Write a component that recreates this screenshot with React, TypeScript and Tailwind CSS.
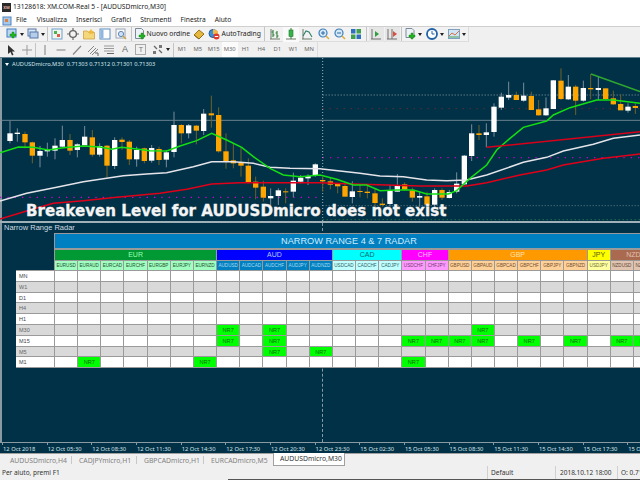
import React from "react";

type C = [number, number, number, number, number, number];
// x, high, low, bodyTop, bodyBottom, 1=white 0=orange  (coordinates at 3x)
const L: C[] = [
  [30,183,250,220,243,1],[52,205,245,218,222,1],[75,215,265,222,247,0],[97,245,310,247,287,0],[120,258,322,273,287,1],[142,248,290,269,274,1],[165,235,298,257,272,1],[187,197,260,240,260,1],[210,222,285,240,272,0],[232,250,292,253,270,1],[254,198,256,230,256,1],[277,210,290,232,284,0],[299,250,290,258,284,1],[321,255,352,257,317,0],[344,232,327,240,318,1],[366,232,270,239,246,0],[388,240,315,245,298,0],[410,260,320,270,298,1],[433,263,310,265,303,0],[455,255,308,264,302,1],[477,260,315,267,300,0],[499,270,322,277,299,1],[522,155,292,195,276,1],[544,192,250,195,220,0],[566,192,235,196,220,1],[589,195,253,197,212,0],[611,147,225,161,213,1],[634,107,203,160,166,0],[656,142,278,165,274,0],[678,220,326,274,303,0],[700,250,325,301,310,0],[723,262,350,308,317,0],[745,295,370,317,367,0],[767,350,418,365,383,0],[790,362,425,380,413,0],[812,385,435,408,415,1],[835,385,435,391,408,1],[857,385,430,394,397,0],[880,338,412,362,395,1],[902,345,370,353,365,1],[924,343,375,348,355,1],[946,310,350,313,345,1],
];
const R: C[] = [
  [8,350,395,360,364,0],[31,352,388,364,374,0],[53,370,400,372,379,0],[75,365,410,378,410,0],[97,364,430,394,411,1],[120,372,412,393,396,0],[142,375,415,395,399,0],[165,385,440,400,429,0],[187,415,440,431,435,0],[210,375,440,393,432,1],[232,342,395,377,395,1],[254,367,392,373,389,0],[277,383,425,391,413,0],[299,395,440,408,413,1],[321,395,437,409,434,0],[344,385,440,390,434,1],[366,385,420,390,413,0],[388,390,415,396,414,1],[410,337,400,371,395,1],[433,285,375,287,373,1],[455,193,303,220,288,1],[477,195,240,220,225,0],[499,190,262,217,225,1],[522,130,230,140,216,1],[544,98,150,110,143,1],[566,65,120,105,113,1],[589,95,120,105,120,0],[611,68,125,107,122,1],[634,95,150,108,150,0],[656,120,167,148,166,0],[678,112,167,145,166,1],[700,60,147,61,147,1],[723,25,120,62,117,0],[745,45,120,80,118,1],[767,75,165,80,122,0],[790,62,125,84,122,1],[812,42,118,84,88,0],[835,50,120,84,90,1],[857,85,120,85,117,0],[880,92,135,115,133,0],[902,103,150,132,151,0],[924,130,158,140,152,1],[946,130,162,138,144,0],
];
const candles: C[] = [...L, ...R.map((c) => [c[0] + 960, c[1], c[2], c[3], c[4], c[5]] as C)];

const shift = (s: string) =>
  s.split(" ").map((p) => { const [x, y] = p.split(","); return `${+x + 960},${y}`; }).join(" ");

const green = "0,278 55,261 100,262 145,270 190,263 250,258 300,261 335,268 365,262 410,267 450,272 500,273 540,258 590,242 635,220 680,240 725,262 760,290 810,325 850,345 900,350 960,345 " +
  shift("50,358 100,375 140,375 180,392 230,390 280,390 320,402 385,402 410,392 450,355 500,315 530,270 570,235 610,202 680,183 700,165 750,143 830,120 880,120 960,130");
const white = "0,423 80,400 170,382 250,365 320,355 370,347 440,342 500,338 580,320 635,305 700,305 760,310 810,322 870,325 960,326 " +
  shift("60,333 120,340 180,348 250,350 320,360 380,362 440,360 500,345 610,307 680,292 730,273 820,253 880,235 960,225");
const red = "0,477 80,453 160,430 250,422 350,412 480,400 560,388 635,372 720,368 800,368 960,368 " +
  shift("100,372 200,375 300,378 440,378 500,368 600,345 680,330 730,315 850,295 960,282");

const groups = [
  { name: "EUR", bg: "bg-[#009933]", text: "text-[#9dffb0]", span: "col-span-7", pbg: "bg-[#a0ffc0]", ptext: "text-[#1f4f30]", pairs: ["EURUSD","EURAUD","EURCAD","EURCHF","EURGBP","EURJPY","EURNZD"] },
  { name: "AUD", bg: "bg-[#0000ff]", text: "text-[#b0c8ff]", span: "col-span-5", pbg: "bg-[#0080c0]", ptext: "text-[#a8d8f0]", pairs: ["AUDUSD","AUDCAD","AUDCHF","AUDJPY","AUDNZD"] },
  { name: "CAD", bg: "bg-[#00ffff]", text: "text-[#006a6a]", span: "col-span-3", pbg: "bg-[#c0ffff]", ptext: "text-[#2f5f5f]", pairs: ["USDCAD","CADCHF","CADJPY"] },
  { name: "CHF", bg: "bg-[#ff00ff]", text: "text-[#ffc0ff]", span: "col-span-2", pbg: "bg-[#ff99ff]", ptext: "text-[#703a70]", pairs: ["USDCHF","CHFJPY"] },
  { name: "GBP", bg: "bg-[#ff9900]", text: "text-[#ffe0b0]", span: "col-span-6", pbg: "bg-[#ffd098]", ptext: "text-[#705030]", pairs: ["GBPUSD","GBPAUD","GBPCAD","GBPCHF","GBPJPY","GBPNZD"] },
  { name: "JPY", bg: "bg-[#ffff00]", text: "text-[#5a5a00]", span: "col-span-1", pbg: "bg-[#ffffa0]", ptext: "text-[#6a6a30]", pairs: ["USDJPY"] },
  { name: "NZD", bg: "bg-[#aa6a50]", text: "text-[#e0c0b0]", span: "col-span-2", pbg: "bg-[#e0c4b0]", ptext: "text-[#604838]", pairs: ["NZDUSD","NZDCAD"] },
];

const rows: [string, number[]][] = [
  ["MN", []], ["W1", []], ["D1", []], ["H4", []], ["H1", []],
  ["M30", [7, 9, 18]],
  ["M15", [7, 9, 15, 16, 17, 18, 20, 22, 24, 25]],
  ["M5", [9, 11]],
  ["M1", [1, 6, 15]],
];
const cols = Array.from({ length: 26 }, (_, i) => i);

const Caret = () => <span className="ml-[2px] w-0 h-0 border-x-[2.5px] border-x-transparent border-t-[3px] border-t-[#222]" />;
const Sep = ({ cls }: { cls: string }) => <div className={`${cls} flex justify-center`}><div className="w-px h-[14px] bg-[#c4c4c4]" /></div>;
const Slot = ({ cls, children }: { cls: string; children: React.ReactNode }) => (
  <div className={`${cls} h-[15px] flex items-center justify-center shrink-0`}>{children}</div>
);
const Ic = ({ children }: { children: React.ReactNode }) => (
  <svg width="12" height="12" viewBox="0 0 12 12" className="shrink-0">{children}</svg>
);

const Plus = ({ x = 6, y = 7 }: { x?: number; y?: number }) => (
  <path d={`M${x - 1} ${y - 3}h2v2h2v2h-2v2h-2v-2h-2v-2h2z`} fill="#21b521" stroke="#0d7d0d" strokeWidth=".4" />
);
const Tf = ["M1", "M5", "M15", "M30", "H1", "H4", "D1", "W1", "MN"];

function Toolbars() {
  return (
    <div className="bg-[#f0f0f0] h-[31px] border-t border-[#cfcfcf] relative shrink-0">
      <div className="w-[469px] h-[15px] flex items-center bg-[#f2f2f2] border-r border-b border-[#dcdcdc]">
        <div className="w-[4px] shrink-0" />
        <Slot cls="w-[22px]"><Ic><rect x="1" y="1" width="9" height="8" fill="#bcd6f0" stroke="#3f7fc0" /><Plus x={7} y={7} /></Ic><Caret /></Slot>
        <Slot cls="w-[20px]"><Ic><rect x="1" y="1" width="8" height="7" fill="#d8e6f6" stroke="#5578a8" /><rect x="3" y="4" width="8" height="6" fill="#b5cdea" stroke="#5578a8" /></Ic><Caret /></Slot>
        <Sep cls="w-[3px]" />
        <Slot cls="w-[16px]"><Ic><rect x="1" y="1" width="10" height="10" fill="#eef6ee" stroke="#6f9fcf" /><rect x="3" y="3" width="3" height="3" fill="#4fb04f" /><rect x="6" y="6" width="3" height="3" fill="#e05a4a" /></Ic></Slot>
        <Slot cls="w-[16px]"><Ic><circle cx="6" cy="6" r="3.4" fill="none" stroke="#666" strokeWidth="1.4" /><path d="M6 0v3M6 9v3M0 6h3M9 6h3" stroke="#666" strokeWidth="1.2" /></Ic></Slot>
        <Slot cls="w-[16px]"><Ic><path d="M0.5 3h4l1 1.5h6v6.5h-11z" fill="#f4d77a" stroke="#c79a34" strokeWidth=".7" /><path d="M8 .8l1 2 2 .3-1.5 1.3.4 2L8 5.4 6.2 6.4l.4-2L5 3.1l2-.3z" fill="#f0b93a" /></Ic></Slot>
        <Slot cls="w-[16px]"><Ic><rect x="1" y="1" width="10" height="10" fill="#fff" stroke="#5f8fc0" /><rect x="1.5" y="1.5" width="3" height="9" fill="#8fb7e0" /></Ic></Slot>
        <Slot cls="w-[16px]"><Ic><rect x="1" y="1" width="9" height="9" fill="#f7f7f7" stroke="#9aa6b5" /><circle cx="6" cy="6" r="2.6" fill="#cfe2f5" stroke="#5f86b5" /><path d="M8 8l3 3" stroke="#c9a24a" strokeWidth="1.4" /></Ic></Slot>
        <Sep cls="w-[5px]" />
        <Slot cls="w-[57px] justify-start gap-[1px]">
          <Ic><path d="M1.500.5h6l2 2v8h-8z" fill="#eef2f6" stroke="#7a8a9a" /><Plus x={8} y={8} /></Ic>
          <span className="text-[6.800px] text-[#222] whitespace-nowrap">Nuovo ordine</span>
        </Slot>
        <Slot cls="w-[17px]"><Ic><path d="M1 7l5-5 5 4-5 5z" fill="#e6b83f" stroke="#9a7420" /><path d="M1 7l5 4 5-5" fill="none" stroke="#8a6a1c" /></Ic></Slot>
        <Slot cls="w-[55px] justify-start gap-[2px]">
          <Ic><circle cx="5" cy="5.500" r="4" fill="#3d8fd6" stroke="#1c5c9c" /><path d="M5 1l5 2v3H5z" fill="#f2b84a" /><circle cx="8.500" cy="8.500" r="3" fill="#e03a2a" /><rect x="6.800" y="8" width="3.400" height="1" fill="#fff" /></Ic>
          <span className="text-[6.800px] text-[#222] whitespace-nowrap">AutoTrading</span>
        </Slot>
        <Sep cls="w-[5px]" />
        <Slot cls="w-[16px]"><Ic><path d="M1 11h10M2 11V1" stroke="#6a7a6a" /><path d="M4 2v7M8 3v7M4 4H2.500M4 7h1.500M8 5H6.500M8 8h1.500" stroke="#2f7f3a" strokeWidth="1.100" /></Ic></Slot>
        <Slot cls="w-[16px]"><div className="w-[16px] h-[15px] bg-[#fafafa] flex items-center justify-center"><Ic><path d="M1 11h10" stroke="#6a7a6a" /><path d="M6 0v11" stroke="#2f7f3a" /><rect x="4" y="2" width="4" height="6.500" fill="#37b24a" stroke="#1f7a2f" strokeWidth=".6" /></Ic></div></Slot>
        <Slot cls="w-[16px]"><Ic><path d="M1 11h10M2 11V1" stroke="#6a7a6a" /><path d="M2 8l3-5 3 1 3 5" stroke="#2f7f6a" fill="none" strokeWidth="1.100" /></Ic></Slot>
        <div className="w-[1px] shrink-0" />
        <Slot cls="w-[16px]"><Ic><circle cx="5" cy="5" r="4" fill="#d6e9f8" stroke="#3f7fb8" strokeWidth="1.200" /><path d="M3 5h4M5 3v4" stroke="#2a6aa8" /><path d="M8 8l3 3" stroke="#d9b040" strokeWidth="1.600" /></Ic></Slot>
        <Slot cls="w-[16px]"><Ic><circle cx="5" cy="5" r="4" fill="#d6e9f8" stroke="#3f7fb8" strokeWidth="1.200" /><path d="M3 5h4" stroke="#2a6aa8" /><path d="M8 8l3 3" stroke="#d9b040" strokeWidth="1.600" /></Ic></Slot>
        <Slot cls="w-[16px]"><Ic><rect x="1" y="1" width="4.500" height="4.500" fill="#2f6fc0" /><rect x="6.500" y="1" width="4.500" height="4.500" fill="#3f9f4f" /><rect x="1" y="6.500" width="4.500" height="4.500" fill="#3f9f4f" /><rect x="6.500" y="6.500" width="4.500" height="4.500" fill="#2f6fc0" /></Ic></Slot>
        <Sep cls="w-[4px]" />
        <Slot cls="w-[16px]"><div className="w-[15px] h-[15px] bg-[#e6e6e6] flex items-center justify-center"><Ic><path d="M1 11h10M2 11V1" stroke="#707070" /><path d="M5 3v6l4-3z" fill="#2f9f3f" /></Ic></div></Slot>
        <Slot cls="w-[16px]"><div className="w-[15px] h-[15px] bg-[#e6e6e6] flex items-center justify-center"><Ic><path d="M1 11h10M2 11V1M6 1v10" stroke="#707070" /><path d="M11 6L7 3v6z" fill="#d8503f" /></Ic></div></Slot>
        <Sep cls="w-[3px]" />
        <Slot cls="w-[21px]"><Ic><path d="M2 .5h6l2 2v7H2z" fill="#eef2f6" stroke="#7a8a9a" /><Plus x={8} y={8} /></Ic><Caret /></Slot>
        <Slot cls="w-[22px]"><Ic><circle cx="6" cy="6" r="5" fill="#fff" stroke="#1f62a8" strokeWidth="1.800" /><path d="M6 3v3h2.500" stroke="#1f62a8" fill="none" /></Ic><Caret /></Slot>
        <Slot cls="w-[22px]"><Ic><rect x=".5" y="1.500" width="11" height="9" fill="#cfe3f5" stroke="#7f9fbf" /><path d="M1 8l3-3 3 2 4-4" stroke="#d8703f" fill="none" /><path d="M1 9h10" stroke="#4fa04f" /></Ic><Caret /></Slot>
      </div>
      <div className="w-[318px] h-[15px] flex items-center border-r border-[#dcdcdc]">
        <div className="w-[3px] shrink-0" />
        <Slot cls="w-[16px]"><Ic><path d="M3 1v9l2.500-2 1.500 3.500 1.500-.7-1.500-3.300h3z" fill="#333" /></Ic></Slot>
        <Slot cls="w-[16px]"><Ic><path d="M6 1v10M1 6h10" stroke="#999" /></Ic></Slot>
        <Sep cls="w-[2px]" />
        <Slot cls="w-[16px]"><Ic><path d="M6 1v10" stroke="#999" strokeWidth="1.300" /></Ic></Slot>
        <Slot cls="w-[16px]"><Ic><path d="M1.500 6h9" stroke="#999" strokeWidth="1.300" /></Ic></Slot>
        <Slot cls="w-[16px]"><Ic><path d="M2 10.500L10 2" stroke="#888" strokeWidth="1.200" /></Ic></Slot>
        <Slot cls="w-[16px]"><Ic><path d="M1 8l6-6M3 10l6-6M5 11l6-6" stroke="#888" /><path d="M8 9h3v3" stroke="#666" fill="none" /></Ic></Slot>
        <Slot cls="w-[16px]"><Ic><path d="M1 2h10M1 4.500h10M1 7h10" stroke="#999" /><path d="M4 9.500h7" stroke="#666" /></Ic></Slot>
        <Slot cls="w-[16px]"><span className="text-[9px] font-['Liberation_Sans',sans-serif] text-[#666]">A</span></Slot>
        <Slot cls="w-[16px]"><div className="w-[11px] h-[11px] border border-[#a8a8a8] flex items-center justify-center text-[7px] text-[#777] leading-none font-['Liberation_Sans',sans-serif]">T</div></Slot>
        <Slot cls="w-[24px]"><Ic><path d="M2 2l3 3M7 6l3 3" stroke="#666" strokeWidth="1.300" /><rect x="1" y="7" width="3" height="3" fill="#777" /><rect x="7" y="1" width="3" height="3" fill="#777" /></Ic><Caret /></Slot>
        <Sep cls="w-[1px]" />
        {Tf.map((t) => (
          <div key={t} className={`w-[15.900px] h-[15px] flex items-center justify-center text-[5.800px] text-[#666] shrink-0 ${t === "M30" ? "bg-[#fbfbfb]" : ""}`}>{t}</div>
        ))}
      </div>
    </div>
  );
}

const ticks = ["12 Oct 2018","12 Oct 05:30","12 Oct 08:30","12 Oct 11:30","12 Oct 14:30","12 Oct 17:30","12 Oct 20:30","12 Oct 23:30","15 Oct 02:30","15 Oct 05:30","15 Oct 08:30","15 Oct 11:30","15 Oct 14:30","15 Oct 17:30","15 Oc"];

export default function App() {
  return (
    <div className="w-[640px] h-[480px] overflow-hidden bg-[#f0f0f0] flex flex-col font-['Noto_Sans',sans-serif]">
      <div className="h-[14px] bg-white flex items-center pl-[2px] gap-[2px] shrink-0">
        <div className="w-[9px] h-[9px] bg-[#2a2a2a] text-[4px] text-[#e8b0a0] leading-[9px] text-center font-bold">XM</div>
        <span className="text-[6.700px] text-[#222] whitespace-nowrap">13128618: XM.COM-Real 5 - [AUDUSDmicro,M30]</span>
      </div>
      <div className="h-[12px] bg-white flex items-center shrink-0 text-[6.700px] text-[#222] pt-[1px]">
        <svg width="10" height="10" viewBox="0 0 10 10" className="ml-[2px]"><rect x="1" y="1" width="8" height="8" fill="#a8c8ea" stroke="#4f86c0" /><rect x="3" y="3" width="3" height="3" fill="#e0803f" /></svg>
        <span className="ml-[4px]">File</span>
        <span className="ml-[10px]">Visualizza</span>
        <span className="ml-[9px]">Inserisci</span>
        <span className="ml-[9px]">Grafici</span>
        <span className="ml-[9px]">Strumenti</span>
        <span className="ml-[9px]">Finestra</span>
        <span className="ml-[9px]">Aiuto</span>
      </div>
      <Toolbars />
      <div className="h-[1px] bg-[#5f7f8f] shrink-0" />

      <div className="relative flex-1 bg-[#003146] border-l-2 border-[#8a9aa2] min-h-0 flex flex-col">
        <div className="relative h-[163px] shrink-0 -ml-[2px]">
          <svg width="640" height="163" viewBox="0 -6 1920 489" className="block">
            <line x1="0" y1="181" x2="1920" y2="181" stroke="#7f929c" strokeWidth="2.500" />
            <line x1="0" y1="412" x2="960" y2="412" stroke="#d000d0" strokeWidth="4" strokeDasharray="4 18" />
            <line x1="968" y1="293" x2="1920" y2="293" stroke="#c000c0" strokeWidth="4" strokeDasharray="4 18" />
            <line x1="968" y1="105" x2="1920" y2="105" stroke="#a8b4ba" strokeWidth="2.500" strokeDasharray="3 6" />
            <line x1="968" y1="146" x2="1920" y2="146" stroke="#8a2a2a" strokeWidth="3" strokeDasharray="3 18" />
            <line x1="968" y1="437" x2="1920" y2="437" stroke="#7f929c" strokeWidth="2.500" strokeDasharray="3 6" />
            <line x1="968" y1="479" x2="1920" y2="479" stroke="#2f8a4a" strokeWidth="3" strokeDasharray="3 9" />
            <line x1="968" y1="-6" x2="968" y2="483" stroke="#a0b0b8" strokeWidth="3" strokeDasharray="3 6" />
            {candles.map((c) => (
              <g key={c[0]}>
                <line x1={c[0]} x2={c[0]} y1={c[1]} y2={c[2]} stroke={c[5] ? "#7a8c9c" : "#6f6228"} strokeWidth="3" />
                <rect x={c[0] - 8} y={c[3]} width="16" height={Math.max(c[4] - c[3], 3)} fill={c[5] ? "#ffffff" : "#ffa500"} />
              </g>
            ))}
            <polyline points={red} fill="none" stroke="#e0001a" strokeWidth="4.500" />
            <polyline points={white} fill="none" stroke="#e4e4ea" strokeWidth="4.500" />
            <polyline points={green} fill="none" stroke="#12e012" strokeWidth="4.500" />
            <line x1="1773" y1="42" x2="1920" y2="95" stroke="#2fa82f" strokeWidth="4.500" />
            <line x1="1460" y1="262" x2="1920" y2="215" stroke="#d8001a" strokeWidth="4.500" />
          </svg>
          <div className="absolute left-[5px] top-[1px] flex items-center gap-[3px] text-[5.700px] leading-[10px] text-[#d8e4ea] whitespace-nowrap">
            <span className="w-0 h-0 border-x-[2.500px] border-x-transparent border-t-[3px] border-t-white" />
            <span>AUDUSDmicro,M30&nbsp; 0.71303 0.71312 0.71301 0.71303</span>
          </div>
          <div className="absolute left-[26px] top-[143px] text-[15.100px] leading-[20px] font-bold text-[#f4f4f4] whitespace-nowrap font-['DejaVu_Sans',sans-serif] [-webkit-text-stroke:0.3px_#f4f4f4]">
            Breakeven Level for AUDUSDmicro does not exist
          </div>
        </div>
        <div className="h-[2px] bg-[#9fb0b8] shrink-0 -ml-[2px]" />

        <div className="relative flex-1 min-h-0 -ml-[2px] overflow-hidden">
          <div className="absolute left-[322px] top-0 bottom-0 border-l border-dashed border-[#8a9aa2]" />
          <div className="relative pl-[4px] h-[10px] text-[7.500px] leading-[10px] text-[#d0dce2] whitespace-nowrap font-['Liberation_Sans',sans-serif]">Narrow Range Radar</div>
          <div className="relative pl-[16px] font-['Liberation_Sans',sans-serif]">
            <div className="ml-[38px] w-[586px] bg-[#9a9a9a] pt-px pl-px">
              <div className="grid grid-cols-[repeat(26,22.170px)] gap-px">
                <div className="col-span-full h-[14px] bg-[#0080c0] text-[9.200px] leading-[14px] text-[#d0ecff] pl-[226px] whitespace-nowrap">NARROW RANGE 4 &amp; 7 RADAR</div>
                <div className="col-span-full h-[1px] bg-[#9a9a9a] -mt-px" />
                {groups.map((g) => (
                  <div key={g.name} className={`${g.span} ${g.bg} ${g.text} h-[10px] text-[7px] leading-[10px] text-center`}>{g.name}</div>
                ))}
                {groups.flatMap((g) => g.pairs.map((p) => (
                  <div key={p} className={`${g.pbg} ${g.ptext} h-[9px] text-[4.600px] leading-[9px] text-center whitespace-nowrap`}>{p}</div>
                )))}
              </div>
            </div>
            <div className="grid grid-cols-[38px_repeat(26,22.170px)] gap-px bg-[#9a9a9a] w-[624px] pb-px pt-px">
              {rows.map(([name, hits], r) => (
                <React.Fragment key={name}>
                  <div className={`h-[9.800px] pl-[3px] text-[5.500px] leading-[10px] ${r % 2 ? "bg-[#d9d9d9] text-[#666]" : "bg-white text-[#444]"}`}>{name}</div>
                  {cols.map((c) => (
                    <div key={c} className={`h-[9.800px] text-[5.600px] leading-[11px] text-center ${hits.includes(c) ? "bg-[#00ff00] text-[#0a6a0a]" : r % 2 ? "bg-[#d9d9d9]" : "bg-white"}`}>
                      {hits.includes(c) ? "NR7" : ""}
                    </div>
                  ))}
                </React.Fragment>
              ))}
            </div>
          </div>
        </div>

        <div className="h-[11px] shrink-0 -ml-[2px] border-t border-[#8a9aa2] flex pl-[2px] text-[5.800px] leading-[8px] text-[#d8e4ea] whitespace-nowrap overflow-hidden bg-[#003146]">
          {ticks.map((t) => (
            <div key={t} className="w-[44.670px] shrink-0">
              <div className="w-px h-[2px] bg-[#8a9aa2]" />
              <div className="pl-[1px]">{t}</div>
            </div>
          ))}
        </div>
      </div>

      <div className="h-[13px] shrink-0 flex border-t border-[#a0a0a0] bg-[#f0f0f0] text-[6.800px] text-[#808080] whitespace-nowrap">
        <div className="w-[72px] pl-[10px] border-r border-[#c8c8c8] my-[2px] leading-[9px]">AUDUSDmicro,H4</div>
        <div className="w-[65px] pl-[7px] border-r border-[#c8c8c8] my-[2px] leading-[9px]">CADJPYmicro,H1</div>
        <div className="w-[67px] pl-[7px] border-r border-[#c8c8c8] my-[2px] leading-[9px]">GBPCADmicro,H1</div>
        <div className="w-[69px] pl-[7px] my-[2px] leading-[9px]">EURCADmicro,M5</div>
        <div className="w-[72px] pl-[6px] bg-white text-[#333] border-x border-b border-[#a0a0a0] -mt-px leading-[12px]">AUDUSDmicro,M30</div>
      </div>
      <div className="h-[13px] shrink-0 flex items-center text-[6.500px] text-[#333] whitespace-nowrap">
        <div className="w-[487px] pl-[2px]">Per aiuto, premi F1</div>
        <div className="w-[68px] pl-[3px] border-l border-[#d0d0d0] h-full leading-[13px]">Default</div>
        <div className="w-[62px] pl-[4px] border-l border-[#d0d0d0] h-full leading-[13px]">2018.10.12 18:00</div>
        <div className="w-[23px] pl-[3px] border-l border-[#d0d0d0] h-full leading-[13px]">O: 0.71</div>
      </div>
      <div className="h-px ml-[228px] bg-[#555] shrink-0" />
    </div>
  );
}
